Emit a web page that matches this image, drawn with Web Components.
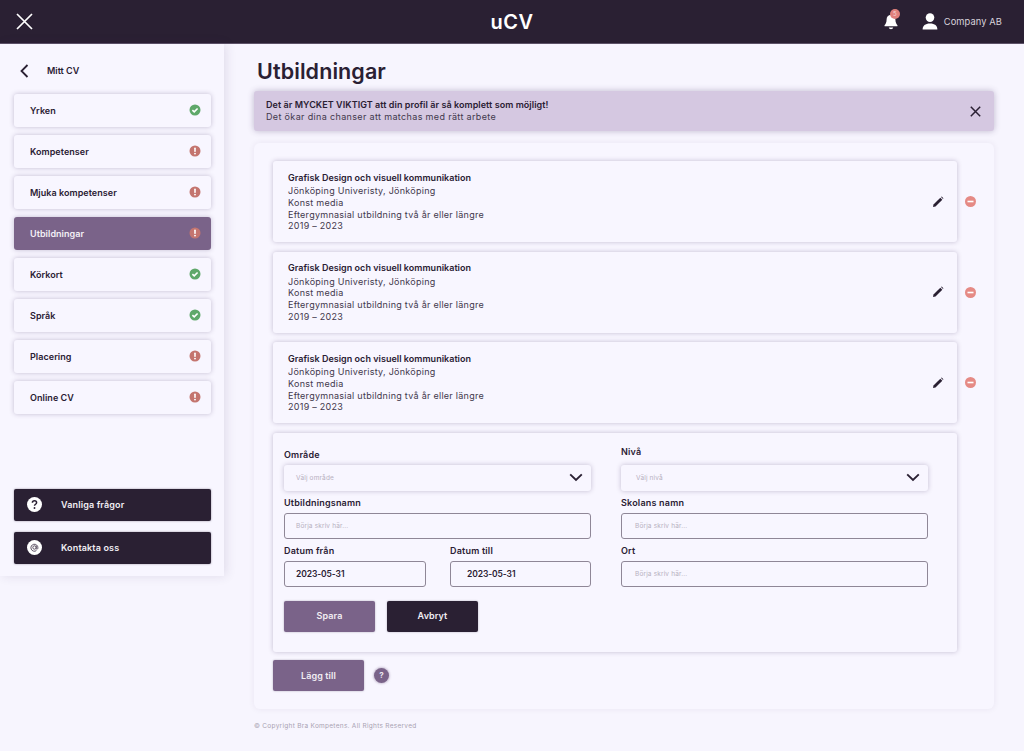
<!DOCTYPE html>
<html lang="sv">
<head>
<meta charset="utf-8">
<title>uCV</title>
<style>
  html, body { margin: 0; padding: 0; }
  body { background: #f7f5fe; color: #2a2033; font-family: Inter, "Liberation Sans", sans-serif; }
</style>
</head>
<body>
<app-shell>
  <top-bar slot="top"></top-bar>
  <side-nav slot="side">
    <nav-item state="ok">Yrken</nav-item>
    <nav-item state="warn">Kompetenser</nav-item>
    <nav-item state="warn">Mjuka kompetenser</nav-item>
    <nav-item state="warn" active>Utbildningar</nav-item>
    <nav-item state="ok">Körkort</nav-item>
    <nav-item state="ok">Språk</nav-item>
    <nav-item state="warn">Placering</nav-item>
    <nav-item state="warn">Online CV</nav-item>
    <side-button slot="bottom" icon="help">Vanliga frågor</side-button>
    <side-button slot="bottom" icon="at">Kontakta oss</side-button>
  </side-nav>
  <h-title>Utbildningar</h-title>
  <alert-box>
    <b>Det är MYCKET VIKTIGT att din profil är så komplett som möjligt!</b><br>
    Det ökar dina chanser att matchas med rätt arbete
  </alert-box>
  <main-panel>
    <edu-card></edu-card>
    <edu-card></edu-card>
    <edu-card></edu-card>
    <edu-form></edu-form>
    <add-row></add-row>
  </main-panel>
  <page-footer>© Copyright Bra Kompetens. All Rights Reserved</page-footer>
</app-shell>
<script>
const FONT = 'Inter, "Liberation Sans", sans-serif';
const DARK = "#2a2033";
const SOFT = "#42384c";
const PURPLE = "#7a6389";
const SHADOW = "0 0 5px rgba(60,40,90,.28)";

const ICONS = {
  ok: `<svg width="12" height="12" viewBox="0 0 12 12"><circle cx="6" cy="6" r="5.5" fill="#5fa86a"/><path d="M3.4 6.2l1.8 1.7 3.4-3.4" fill="none" stroke="#fff" stroke-width="1.6"/></svg>`,
  warn: `<svg width="12" height="12" viewBox="0 0 12 12"><circle cx="6" cy="6" r="5.5" fill="#c4756f"/><rect x="5.2" y="2.6" width="1.6" height="4.3" rx=".7" fill="#fff"/><circle cx="6" cy="8.6" r=".95" fill="#fff"/></svg>`,
  help: `<svg width="15" height="15" viewBox="0 0 15 15"><circle cx="7.5" cy="7.5" r="7.5" fill="#fff"/><path d="M5.4 5.8c0-1.3 1-2 2.1-2s2.1.7 2.1 1.9c0 1.5-2.1 1.6-2.1 3.1" fill="none" stroke="${DARK}" stroke-width="1.5"/><circle cx="7.5" cy="11" r=".95" fill="${DARK}"/></svg>`,
  at: `<svg width="15" height="15" viewBox="0 0 15 15"><circle cx="7.5" cy="7.5" r="7.5" fill="#fff"/><circle cx="7.5" cy="7.5" r="1.7" fill="none" stroke="#5b5063" stroke-width="1"/><path d="M9.2 5.8v2.6c0 1.2 1.7 1.2 1.7-.6a3.5 3.5 0 1 0-1.5 2.8" fill="none" stroke="#5b5063" stroke-width="1"/></svg>`,
  chevron: `<svg width="14" height="9" viewBox="0 0 14 9"><path d="M1.2 1.4L7 7l5.8-5.6" fill="none" stroke="${DARK}" stroke-width="1.9"/></svg>`,
};

class AppShell extends HTMLElement {
  constructor() {
    super();
    this.attachShadow({ mode: "open" }).innerHTML = `<style>
      :host { display: block; width: 1024px; height: 751px; overflow: hidden; font-family: ${FONT}; color: ${DARK}; }
      .body { display: flex; align-items: flex-start; }
      .content { flex: 1; padding: 0 30px 0 30px; min-width: 0; }
    </style>
    <slot name="top"></slot>
    <div class="body">
      <slot name="side"></slot>
      <div class="content"><slot></slot></div>
    </div>`;
  }
}

class TopBar extends HTMLElement {
  constructor() {
    super();
    this.attachShadow({ mode: "open" }).innerHTML = `<style>
      :host { display: grid; grid-template-columns: 1fr auto 1fr; align-items: center; height: 43px; background: ${DARK}; border-bottom: 1px solid #5d5268; box-sizing: content-box; color: #fff; }
      .close { display: flex; padding-left: 16px; }
      .logo { font-size: 20px; font-weight: 600; letter-spacing: .5px; }
      .right { display: flex; justify-content: flex-end; align-items: center; padding-right: 22px; }
      .bell { position: relative; display: flex; margin-right: 24px; }
      .badge { position: absolute; left: 6px; top: -5px; width: 10px; height: 10px; border-radius: 50%; background: #e0807c; color: #f7d9d6; font-size: 6px; line-height: 10px; text-align: center; }
      .user { display: flex; margin-right: 6px; }
      .name { font-size: 9.300px; color: #d8d3dc; letter-spacing: .1px; }
    </style>
    <div class="close"><svg width="17" height="17" viewBox="0 0 17 17"><path d="M1 1l15 15M16 1L1 16" stroke="#fff" stroke-width="1.7" fill="none"/></svg></div>
    <div class="logo">uCV</div>
    <div class="right">
      <div class="bell">
        <svg width="14" height="16" viewBox="0 0 14 16"><path d="M7 .8c-2.900 0-4.400 2.200-4.400 4.800 0 3-1 4.400-2 5.600-.3.400-.1 1 .5 1h11.800c.6 0 .8-.6.5-1-1-1.200-2-2.600-2-5.600C11.400 3 9.900.8 7 .8z" fill="#fff"/><path d="M4.800 13.600h4.400c-.2 1-1.100 1.600-2.200 1.600s-2-.6-2.200-1.600z" fill="#fff"/></svg>
        <span class="badge">5</span>
      </div>
      <div class="user"><svg width="16" height="17" viewBox="0 0 16 17"><circle cx="8" cy="4.600" r="4.300" fill="#fff"/><path d="M.6 16.600c0-3.700 2.600-6 7.400-6s7.400 2.300 7.400 6z" fill="#fff"/></svg></div>
      <span class="name">Company AB</span>
    </div>`;
  }
}

class SideNav extends HTMLElement {
  constructor() {
    super();
    this.attachShadow({ mode: "open" }).innerHTML = `<style>
      :host { display: block; flex: none; width: 224px; height: 532px; box-sizing: border-box; padding: 0 13px 0 14px; background: #f8f6ff; box-shadow: 2px 0 10px rgba(60,40,90,.12); }
      .back { display: flex; align-items: center; height: 50px; padding-top: 3px; box-sizing: border-box; font-size: 9px; font-weight: 600; padding-left: 6px; gap: 18px; }
      .items { display: flex; flex-direction: column; gap: 8.500px; height: 395px; }
      .bottom { display: flex; flex-direction: column; gap: 11px; }
    </style>
    <div class="back"><svg width="9" height="14" viewBox="0 0 9 14"><path d="M7.500 1L1.500 7l6 6" fill="none" stroke="${DARK}" stroke-width="1.800"/></svg><span>Mitt CV</span></div>
    <div class="items"><slot></slot></div>
    <div class="bottom"><slot name="bottom"></slot></div>`;
  }
}

class NavItem extends HTMLElement {
  constructor() {
    super();
    const on = this.hasAttribute("active");
    this.attachShadow({ mode: "open" }).innerHTML = `<style>
      :host { display: flex; align-items: center; justify-content: space-between; height: 32.500px; box-sizing: border-box; padding: 0 10px 0 16px; border-radius: 3px;
        background: ${on ? PURPLE : "#f8f6ff"}; color: ${on ? "#f3eff6" : DARK}; box-shadow: ${SHADOW}; font-size: 9px; font-weight: 600; letter-spacing: .05px; }
      svg { display: block; }
    </style><slot></slot>${ICONS[this.getAttribute("state")]}`;
  }
}

class SideButton extends HTMLElement {
  constructor() {
    super();
    this.attachShadow({ mode: "open" }).innerHTML = `<style>
      :host { display: flex; align-items: center; gap: 19px; height: 32px; padding-left: 13px; padding-bottom: 1px; box-sizing: border-box; background: ${DARK}; color: #f1eef3; border-radius: 2px; font-size: 9px; font-weight: 600; letter-spacing: .15px; box-shadow: 0 0 2px rgba(40,30,50,.5); }
      svg { display: block; }
    </style>${ICONS[this.getAttribute("icon")]}<slot></slot>`;
  }
}

class HTitle extends HTMLElement {
  constructor() {
    super();
    this.attachShadow({ mode: "open" }).innerHTML = `<style>
      :host { display: block; height: 47px; padding: 14px 0 0 3px; box-sizing: border-box; font-size: 21.500px; line-height: 27px; font-weight: 600; letter-spacing: .1px; }
    </style><slot></slot>`;
  }
}

class AlertBox extends HTMLElement {
  constructor() {
    super();
    this.attachShadow({ mode: "open" }).innerHTML = `<style>
      :host { display: flex; align-items: center; justify-content: space-between; height: 40px; box-sizing: border-box; padding: 0 13px 0 12px; background: #d5c8e1; border-radius: 3px; box-shadow: 0 0 6px rgba(60,40,90,.3); }
      .text { font-size: 9px; line-height: 12px; letter-spacing: .35px; color: ${SOFT}; }
      ::slotted(b) { font-weight: 600; letter-spacing: .06px; color: ${DARK}; }
      svg { display: block; }
    </style><div class="text"><slot></slot></div>
    <svg width="11" height="11" viewBox="0 0 11 11"><path d="M.8.8l9.400 9.400M10.200.8L.8 10.200" stroke="${DARK}" stroke-width="1.500" fill="none"/></svg>`;
  }
}

class MainPanel extends HTMLElement {
  constructor() {
    super();
    this.attachShadow({ mode: "open" }).innerHTML = `<style>
      :host { display: flex; flex-direction: column; gap: 9.500px; height: 566px; margin-top: 12px; box-sizing: border-box; padding: 18px 37px 0 19px; background: #f8f6ff; border-radius: 6px; box-shadow: 0 0 6px rgba(60,40,90,.08); }
    </style><slot></slot>`;
  }
}

class EduCard extends HTMLElement {
  constructor() {
    super();
    this.attachShadow({ mode: "open" }).innerHTML = `<style>
      :host { display: flex; align-items: center; height: 81px; box-sizing: border-box; padding: 0 13px 0 15px; position: relative; border-radius: 3px; background: #f8f6ff; box-shadow: ${SHADOW}; font-size: 9px; line-height: 11.800px; letter-spacing: .27px; color: ${SOFT}; }
      .info { flex: 1; }
      .info b { display: block; font-weight: 600; padding-top: 1px; margin-bottom: 1.500px; letter-spacing: .03px; color: ${DARK}; }
      svg { display: block; }
      .remove { position: absolute; right: -19px; top: 35px; }
    </style>
    <div class="info">
      <b>Grafisk Design och visuell kommunikation</b>
      Jönköping Univeristy, Jönköping<br>
      Konst media<br>
      Eftergymnasial utbildning två år eller längre<br>
      2019 – 2023
    </div>
    <svg width="12" height="12" viewBox="0 0 12 12"><path d="M1 11l.5-2.500L8.300 1.700l2 2L3.500 10.500z" fill="${DARK}"/><path d="M9 1l.7-.4 1.700 1.700-.4.700z" fill="${DARK}"/></svg>
    <svg class="remove" width="11" height="11" viewBox="0 0 11 11"><circle cx="5.500" cy="5.500" r="5.500" fill="#e58a85"/><rect x="2.500" y="4.700" width="6" height="1.600" fill="#fff"/></svg>`;
  }
}

class FormField extends HTMLElement {
  constructor() {
    super();
    const kind = this.getAttribute("kind") || "input";
    const ph = this.getAttribute("placeholder");
    const val = this.getAttribute("value");
    this.attachShadow({ mode: "open" }).innerHTML = `<style>
      :host { display: block; }
      label { display: block; height: 22px; line-height: 23px; font-size: 9px; font-weight: 600; letter-spacing: .2px; }
      :host([high]) label { line-height: 18px; }
      .box { display: flex; align-items: center; justify-content: space-between; height: 26px; box-sizing: border-box; padding: 0 8px 0 ${this.getAttribute("pad") || 12}px; border-radius: 3px; background: #f8f6ff; font-size: 6.500px; color: #b7b0c0; letter-spacing: .15px; }
      .input { border: 1px solid #8f8797; }
      .select { box-shadow: 0 0 5px rgba(60,40,90,.28); }
      .value { color: ${DARK}; font-size: 8.500px; font-weight: 600; letter-spacing: -.1px; }
      svg { display: block; }
    </style>
    <label>${this.getAttribute("label")}</label>
    <div class="box ${kind}"><span class="${val ? "value" : ""}">${val || ph}</span>${kind == "select" ? ICONS.chevron : ""}</div>`;
  }
}

class ActionButton extends HTMLElement {
  constructor() {
    super();
    this.attachShadow({ mode: "open" }).innerHTML = `<style>
      :host { display: flex; align-items: center; justify-content: center; width: 91px; height: 31px; flex: none; border-radius: 2px; background: var(--bg, ${PURPLE}); color: #f1eef3; font-size: 9px; font-weight: 600; letter-spacing: .1px; padding-bottom: 1px; box-sizing: border-box; box-shadow: 0 0 2px rgba(40,30,50,.35); }
    </style><slot></slot>`;
  }
}

class EduForm extends HTMLElement {
  constructor() {
    super();
    this.attachShadow({ mode: "open" }).innerHTML = `<style>
      :host { display: block; height: 219px; box-sizing: border-box; padding: 10px 29px 0 11px; border-radius: 3px; background: #f8f6ff; box-shadow: ${SHADOW}; }
      .grid { display: grid; grid-template-columns: 307px 307px; column-gap: 30px; }
      .col { display: flex; flex-direction: column; }
      .dates { display: grid; grid-template-columns: 142px 141px; column-gap: 24px; }
      .actions { display: flex; gap: 12px; margin-top: 14px; }
      action-button.dark { --bg: ${DARK}; }
    </style>
    <div class="grid">
      <div class="col">
        <form-field kind="select" label="Område" pad="12" placeholder="Välj område"></form-field>
        <form-field label="Utbildningsnamn" pad="11" placeholder="Börja skriv här..."></form-field>
        <div class="dates">
          <form-field label="Datum från" pad="11" value="2023-05-31"></form-field>
          <form-field label="Datum till" pad="16" value="2023-05-31"></form-field>
        </div>
      </div>
      <div class="col">
        <form-field kind="select" high label="Nivå" pad="15" placeholder="Välj nivå"></form-field>
        <form-field label="Skolans namn" pad="13" placeholder="Börja skriv här..."></form-field>
        <form-field label="Ort" pad="13" placeholder="Börja skriv här..."></form-field>
      </div>
    </div>
    <div class="actions">
      <action-button>Spara</action-button>
      <action-button class="dark">Avbryt</action-button>
    </div>`;
  }
}

class AddRow extends HTMLElement {
  constructor() {
    super();
    this.attachShadow({ mode: "open" }).innerHTML = `<style>
      :host { display: flex; align-items: center; gap: 10px; margin-top: -1px; }
      .q { width: 15px; height: 15px; border-radius: 50%; background: ${PURPLE}; color: #eee9f2; font-size: 8px; font-weight: 700; line-height: 15px; text-align: center; box-shadow: 0 0 2px 1px rgba(122,99,137,.35); }
    </style><action-button>Lägg till</action-button><div class="q">?</div>`;
  }
}

class PageFooter extends HTMLElement {
  constructor() {
    super();
    this.attachShadow({ mode: "open" }).innerHTML = `<style>
      :host { display: block; margin-top: 12px; font-size: 6.500px; line-height: 10px; color: #a9a2b2; letter-spacing: .28px; }
    </style><slot></slot>`;
  }
}

customElements.define("app-shell", AppShell);
customElements.define("top-bar", TopBar);
customElements.define("side-nav", SideNav);
customElements.define("nav-item", NavItem);
customElements.define("side-button", SideButton);
customElements.define("h-title", HTitle);
customElements.define("alert-box", AlertBox);
customElements.define("main-panel", MainPanel);
customElements.define("edu-card", EduCard);
customElements.define("form-field", FormField);
customElements.define("action-button", ActionButton);
customElements.define("edu-form", EduForm);
customElements.define("add-row", AddRow);
customElements.define("page-footer", PageFooter);
</script>
</body>
</html>
